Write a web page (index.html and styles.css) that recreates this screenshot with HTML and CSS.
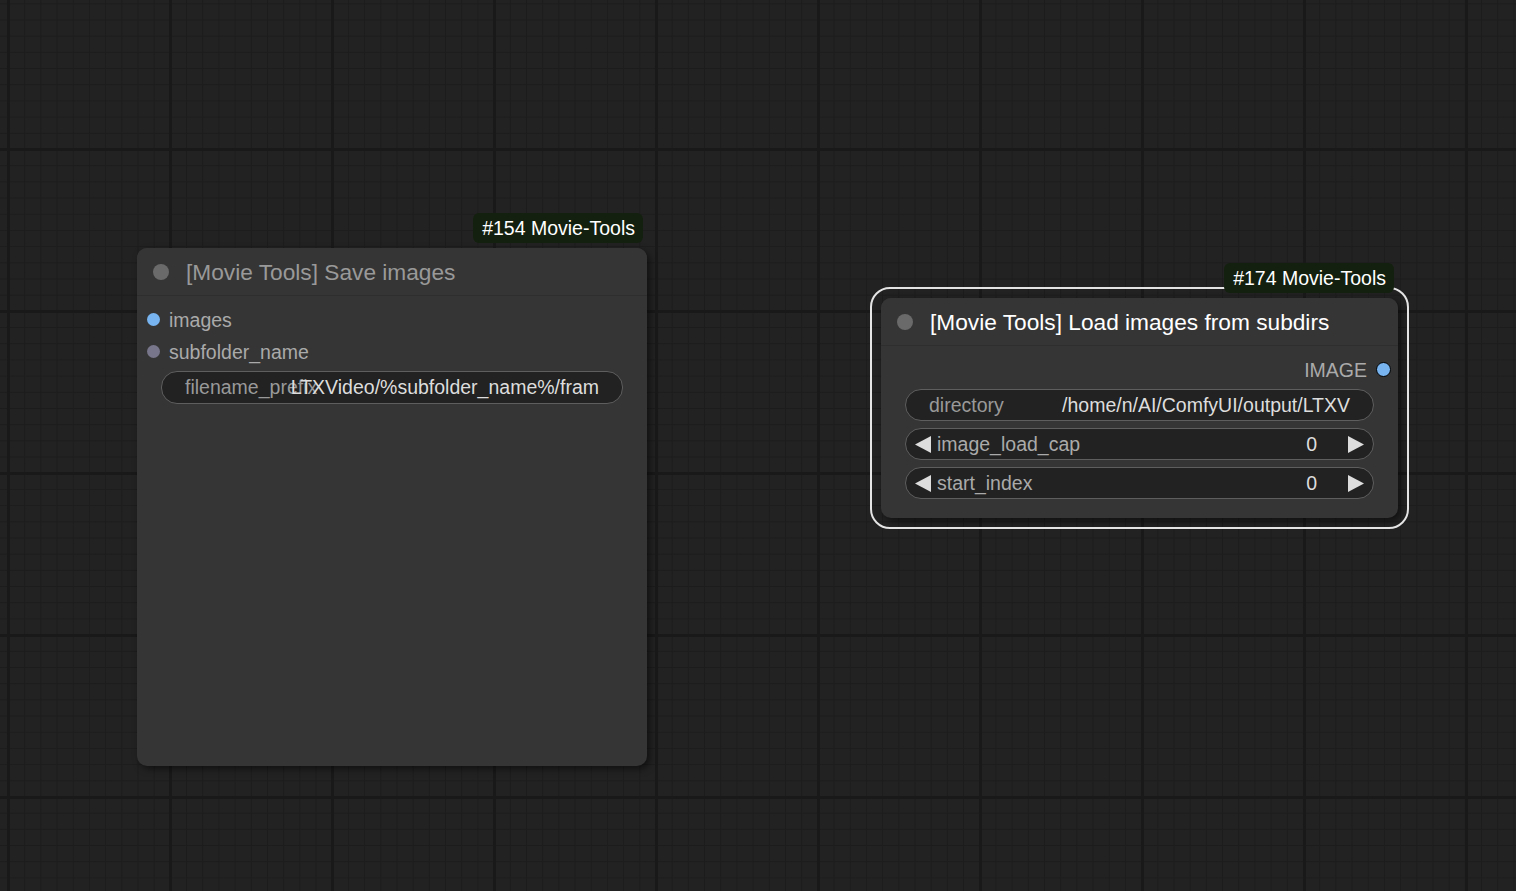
FILE: index.html
```html
<!DOCTYPE html>
<html>
<head>
<meta charset="utf-8">
<link rel="stylesheet" href="styles.css">
</head>
<body>
<div class="canvas">
  <div class="node n154">
    <div class="badge">#154 Movie-Tools</div>
    <div class="title">
      <span class="tdot"></span>
      <span class="ttext">[Movie Tools] Save images</span>
    </div>
    <div class="body">
      <div class="slot"><span class="sdot blue"></span><span class="slabel">images</span></div>
      <div class="slot"><span class="sdot gray"></span><span class="slabel">subfolder_name</span></div>
      <div class="widget text-w">
        <span class="wlabel">filename_prefix</span>
        <span class="wvalue">LTXVideo/%subfolder_name%/fram</span>
      </div>
    </div>
  </div>

  <div class="node n174">
    <div class="selection"></div>
    <div class="badge">#174 Movie-Tools</div>
    <div class="title">
      <span class="tdot"></span>
      <span class="ttext sel">[Movie Tools] Load images from subdirs</span>
    </div>
    <div class="body">
      <div class="slot out"><span class="slabel">IMAGE</span><span class="sdot blue ring"></span></div>
      <div class="widgets">
        <div class="widget text-w">
          <span class="wlabel">directory</span>
          <span class="wvalue">/home/n/AI/ComfyUI/output/LTXV</span>
        </div>
        <div class="widget num-w">
          <svg class="arrow" width="16" height="17" viewBox="0 0 16 17"><polygon points="16,0 16,17 0,8.5" fill="#ddd"/></svg>
          <span class="nlabel">image_load_cap</span>
          <span class="nvalue">0</span>
          <svg class="arrow" width="16" height="17" viewBox="0 0 16 17"><polygon points="0,0 0,17 16,8.5" fill="#ddd"/></svg>
        </div>
        <div class="widget num-w">
          <svg class="arrow" width="16" height="17" viewBox="0 0 16 17"><polygon points="16,0 16,17 0,8.5" fill="#ddd"/></svg>
          <span class="nlabel">start_index</span>
          <span class="nvalue">0</span>
          <svg class="arrow" width="16" height="17" viewBox="0 0 16 17"><polygon points="0,0 0,17 16,8.5" fill="#ddd"/></svg>
        </div>
      </div>
    </div>
  </div>
</div>
</body>
</html>
```

FILE: styles.css
```css
html, body {
  margin: 0;
  padding: 0;
}
body {
  width: 1516px;
  height: 891px;
  overflow: hidden;
  font-family: "Liberation Sans", Arial, sans-serif;
  background-color: #222222;
  background-image:
    linear-gradient(to right, #191919 3px, transparent 3px),
    linear-gradient(to bottom, #191919 3px, transparent 3px),
    linear-gradient(to right, #1c1c1c 1px, transparent 1px),
    linear-gradient(to bottom, #1c1c1c 1px, transparent 1px);
  background-size: 162px 162px, 162px 162px, 16.2px 16.2px, 16.2px 16.2px;
  background-position: 7px 0, 0 148px, 8px 0, 0 149px;
}
.canvas {
  position: relative;
  width: 1516px;
  height: 891px;
}
.node {
  position: absolute;
  background: #353535;
  border-radius: 10px;
  box-shadow: 3px 3px 7px rgba(0, 0, 0, 0.5);
  display: flex;
  flex-direction: column;
}
.n154 {
  left: 137px;
  top: 248px;
  width: 510px;
  height: 518px;
}
.n174 {
  left: 881px;
  top: 298px;
  width: 517px;
  height: 220px;
}
.selection {
  position: absolute;
  left: -11px;
  top: -11px;
  right: -11px;
  bottom: -11px;
  border: 2px solid #e4e4e4;
  border-radius: 20px;
}
.badge {
  position: absolute;
  right: 4px;
  top: -35px;
  height: 30px;
  padding: 0 8px 0 9px;
  display: flex;
  align-items: center;
  background: #14200f;
  color: #fff;
  font-size: 19.5px;
  border-radius: 6px;
  white-space: nowrap;
}
.title {
  height: 48px;
  display: flex;
  align-items: center;
  padding-left: 16px;
  gap: 17px;
  border-bottom: 1px solid #2e2e2e;
  box-sizing: border-box;
  border-radius: 10px 10px 0 0;
  background: #353535;
}
.tdot {
  width: 16px;
  height: 16px;
  border-radius: 50%;
  background: #6a6a6a;
  flex: none;
}
.ttext {
  font-size: 22.7px;
  color: #999;
  white-space: nowrap;
  padding-top: 2px;
}
.ttext.sel {
  color: #fff;
}
.body {
  padding-top: 7px;
  display: flex;
  flex-direction: column;
}
.slot {
  height: 32px;
  display: flex;
  align-items: center;
  padding-left: 10px;
  gap: 9px;
}
.slot .slabel {
  padding-top: 2px;
}
.slot.out {
  justify-content: flex-end;
  padding-left: 0;
  padding-right: 7px;
  gap: 9px;
}
.sdot {
  width: 13px;
  height: 13px;
  border-radius: 50%;
  flex: none;
  box-sizing: border-box;
}
.sdot.blue {
  background: #78b4f0;
}
.sdot.gray {
  background: #77768a;
}
.sdot.ring {
  border: 1.5px solid #000;
  width: 15px;
  height: 15px;
}
.slabel {
  font-size: 19.5px;
  color: #aaa;
  white-space: nowrap;
}
.widgets {
  display: flex;
  flex-direction: column;
  gap: 7px;
  margin-top: 4px;
}
.n154 .widget {
  margin-top: 4px;
}
.widget {
  margin-left: 24px;
  margin-right: 24px;
  height: 33px;
  box-sizing: border-box;
  border: 1px solid #5e5e5e;
  border-radius: 16px;
  background: #222;
  font-size: 19.5px;
  white-space: nowrap;
}
.widgets .widget {
  height: 32px;
}
.text-w {
  display: grid;
  align-items: center;
  padding: 0 23px;
}
.text-w > span {
  grid-area: 1 / 1;
}
.wlabel {
  color: #999;
  justify-self: start;
}
.wvalue {
  color: #ddd;
  justify-self: end;
}
.num-w {
  display: flex;
  align-items: center;
  padding: 0 9px;
}
.arrow {
  flex: none;
}
.nlabel {
  color: #aaa;
  margin-left: 6px;
  flex: 1;
}
.nvalue {
  color: #ddd;
  margin-right: 31px;
}
```
